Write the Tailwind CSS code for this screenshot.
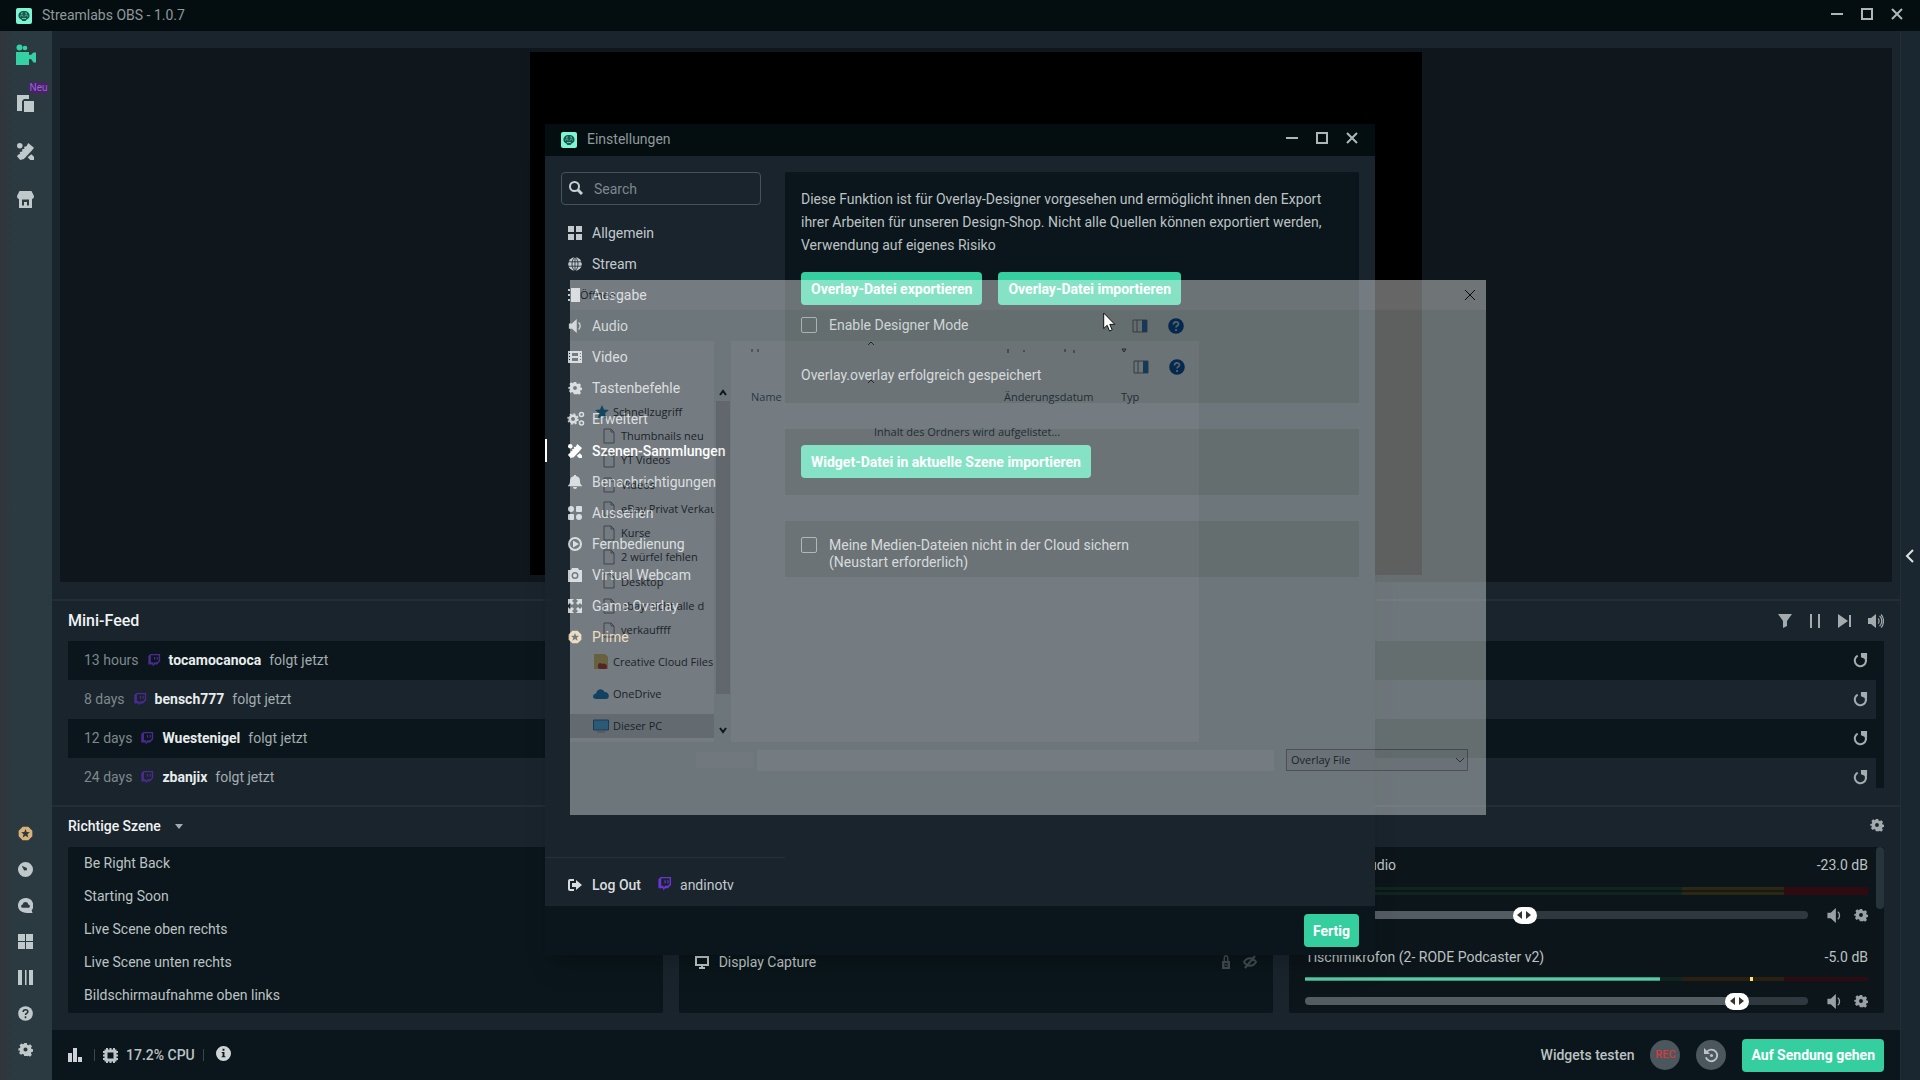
<!DOCTYPE html>
<html lang="de">

<head>
  <meta charset="UTF-8" />
  <meta name="viewport" content="width=device-width, initial-scale=1.0" />
  <title>Streamlabs OBS</title>
  <script src="https://cdn.jsdelivr.net/npm/@tailwindcss/browser@4"></script>
</head>

<body class="relative h-screen overflow-hidden flex flex-col bg-[#19242d] text-[#bdc2c4] text-sm font-[Roboto,sans-serif]">

  <!-- Icon sprite -->
  <svg class="hidden" aria-hidden="true">
    <symbol id="logo" viewBox="0 0 16 16">
      <rect width="16" height="16" rx="2" fill="#80f5d2" />
      <path d="M2.500 8.500C2 5 4.500 3 8 3s6 2 5.500 5.500c-.2 1.500-1.500 2.500-2.500 2.800L9.500 13h-3L5 11.300c-1-.3-2.300-1.300-2.500-2.800z" fill="#17594f" />
      <path d="M4.500 8.500c0-2 2.500-2 2.500 0M9 8.500c0-2 2.500-2 2.500 0M6 10.500h4M5 5.500l2-.7M11 5.500l-2-.7" stroke="#5ec9ab" fill="none" />
    </symbol>
    <symbol id="gear" viewBox="0 0 16 16">
      <path fill-rule="evenodd" d="M6.600 1h2.800l.4 1.900 1.500.6 1.600-1 2 2-1 1.600.5 1.400 1.600.3v2.500l-1.700.4-.5 1.400 1 1.600-2 2-1.600-1-1.400.6L9.400 15H6.600l-.4-1.700-1.500-.6-1.600 1-2-2 1-1.600-.5-1.400L.4 9.200V6.800L2 6.500l.6-1.500-1-1.600 2-1.900 1.500 1 1.300-.6zM8 5.800a2.200 2.200 0 1 0 0 4.400 2.200 2.200 0 0 0 0-4.400z" />
    </symbol>
    <symbol id="twitch" viewBox="0 0 16 16">
      <path fill-rule="evenodd" d="M4 1h11v8.500L11.500 13H8.800L6.500 15.500V13H1.500V3.500zM4.500 2.500v8H7v1.700l1.800-1.700h2.700l2-2v-6zM8 4.500h1.300v3.300H8zm3 0h1.300v3.300H11z" />
    </symbol>
    <symbol id="replay" viewBox="0 0 16 16">
      <path d="M5 2.800A6 6 0 1 0 13 5" fill="none" stroke="currentColor" stroke-width="2.200" />
      <path d="M8.500 0H15v6.300h-2L8.500 4.500z" />
    </symbol>
    <symbol id="speaker" viewBox="0 0 16 16">
      <path d="M1 5h3.500L10 0v16l-5.500-5H1z" />
      <path d="M12 4c2.500 1.500 2.500 6.500 0 8" fill="none" stroke="currentColor" stroke-width="1.500" />
    </symbol>
    <symbol id="tools" viewBox="0 0 16 16">
      <path d="M10.500 0L16 4.500l-2 2.500L6.500 15 3 16 0 12.500 1 11l2-1-.5-1.500L5 8l-.3-2L7 5.500l-.3-2L9 3z" />
      <circle cx="2.600" cy="2.600" r="2.600" />
      <path d="M13.500 10.500L16 13v3h-3.500L10 13.500z" />
    </symbol>
    <symbol id="prime" viewBox="0 0 16 16">
      <path fill-rule="evenodd" d="M5 .8h6l4.300 4.200v6L11 15.200H5L.7 11V5zM8 3.300L6.700 6.500 3.300 6.700l2.600 2.200L5 12.300l3-1.900 3 1.900-.9-3.400 2.600-2.200-3.400-.2z" />
    </symbol>
    <symbol id="doc" viewBox="0 0 12 16">
      <path d="M1 1h7l3 3v11H1zM8 1v3h3" fill="none" stroke="#777" />
    </symbol>
    <symbol id="help" viewBox="0 0 16 16">
      <circle cx="8" cy="8" r="7.800" />
      <path d="M5.500 6.500c0-3.300 5-3.300 5-.5 0 1.800-2.500 1.800-2.500 3.500M8 11v2" fill="none" stroke="currentColor" stroke-width="1.700" />
    </symbol>
    <symbol id="win-min" viewBox="0 0 14 14">
      <path d="M1 7h12" fill="none" stroke="currentColor" stroke-width="2" />
    </symbol>
    <symbol id="win-max" viewBox="0 0 14 14">
      <path d="M2 2h10v10H2z" fill="none" stroke="currentColor" stroke-width="2" />
    </symbol>
    <symbol id="win-close" viewBox="0 0 14 14">
      <path d="M2 2l10 10M12 2L2 12" fill="none" stroke="currentColor" stroke-width="2" />
    </symbol>
    <symbol id="preview-pane" viewBox="0 0 16 14">
      <path d="M1 1h14v12H1zM5 1v12" fill="none" stroke="#777" />
      <path d="M10 1h5v12h-5z" fill="#2a6db5" />
    </symbol>
    <symbol id="thumb-arrows" viewBox="0 0 14 8">
      <path d="M5 0v8L0 4zM9 0v8l5-4z" />
    </symbol>
  </svg>

  <!-- Title bar -->
  <header class="flex items-center h-[31px] shrink-0 pl-4 pr-4 bg-[#040e11] text-[#90989a]">
    <svg class="size-4"><use href="#logo" /></svg>
    <h1 class="ml-[10px] pb-px">Streamlabs OBS - 1.0.7</h1>
    <div class="ml-auto flex gap-4 pb-1 text-[#b0b6b7]">
      <button aria-label="Minimieren"><svg class="size-[14px]"><use href="#win-min" /></svg></button>
      <button aria-label="Maximieren"><svg class="size-[14px]"><use href="#win-max" /></svg></button>
      <button aria-label="Schließen"><svg class="size-[14px]"><use href="#win-close" /></svg></button>
    </div>
  </header>

  <div class="flex flex-1 min-h-0">

    <!-- Left navigation -->
    <nav class="flex flex-col justify-between items-center w-[52px] shrink-0 pt-[6px] pb-[13px] pr-px bg-linear-to-r from-[#30353b] to-[#2b3a41] to-30% text-[#bfc9cc] fill-current">
      <div class="flex flex-col gap-[12px]">
        <button aria-label="Editor" class="flex items-center justify-center h-9 text-[#35d0a3]">
          <svg class="w-5 h-[22px]" viewBox="0 0 20 22"><circle cx="3.500" cy="3.500" r="3" /><circle cx="9" cy="4" r="2.300" /><path d="M0 8h13v3l2-.2 2.500-2.300H20v10h-2.500L15 15l-2 .3V21H0z" /></svg>
        </button>
        <button aria-label="Layouts" class="relative flex items-center justify-center h-9">
          <svg class="size-[17px]" viewBox="0 0 17 17"><path d="M0 0h12v4H7L5 6v10H0z" /><path d="M7 6h10v11H7z" /></svg>
          <span class="absolute -top-[3px] left-[13px] px-px rounded-sm bg-[#45265f] text-[#9b5fe0] text-[10px] leading-[12px]">Neu</span>
        </button>
        <button aria-label="Themes" class="flex items-center justify-center h-9"><svg class="size-[17px]"><use href="#tools" /></svg></button>
        <button aria-label="App Store" class="flex items-center justify-center h-9">
          <svg class="size-[17px]" viewBox="0 0 17 17"><path fill-rule="evenodd" d="M2.500 0h12L17 5c0 2-1 3-2 3v9H2V8C1 8 0 7 0 5zM5 8.500v6h2V11h3v3.500h2v-6z" /></svg>
        </button>
      </div>
      <div class="flex flex-col">
        <button aria-label="Prime" class="flex items-center justify-center h-9 text-[#d8b27a]"><svg class="size-[15px]"><use href="#prime" /></svg></button>
        <button aria-label="Dashboard" class="flex items-center justify-center h-9"><svg class="size-[15px]" viewBox="0 0 16 16"><path fill-rule="evenodd" d="M8 0a8 8 0 1 1 0 16A8 8 0 0 1 8 0zM4 4l2.500 5 3-.3V6.300z" /></svg></button>
        <button aria-label="Cloudbot" class="flex items-center justify-center h-9"><svg class="size-[15px]" viewBox="0 0 16 16"><path fill-rule="evenodd" d="M8 0c9 0 10 10 6.500 13l1 3H10C3 16 0 12 0 8s3-8 8-8zM5 10.500h6c2.500 0 2-3.500 0-3.500-.5-3.500-5.500-3.500-6 0-2 0-2.500 3.500 0 3.500z" /></svg></button>
        <button aria-label="Layout" class="flex items-center justify-center h-9"><svg class="size-[15px]" viewBox="0 0 15 15"><path d="M0 0h7v7H0zM8 0h7v7H8zM0 8h7v7H0zM8 8h7v7H8z" /></svg></button>
        <button aria-label="Statistik" class="flex items-center justify-center h-9"><svg class="size-[15px]" viewBox="0 0 15 15"><path d="M0 0h4v15H0zM7 0h1.500v15H7zM11 0h4v15h-4z" /></svg></button>
        <button aria-label="Hilfe" class="flex items-center justify-center h-9"><svg class="size-[15px] fill-[#bfc9cc] text-[#26343b]"><use href="#help" /></svg></button>
        <button aria-label="Einstellungen" class="flex items-center justify-center h-9"><svg class="size-[15px]"><use href="#gear" /></svg></button>
      </div>
    </nav>

    <main class="flex flex-col flex-1 min-w-0">
      <!-- Preview -->
      <section class="flex-1 min-h-0 px-2 py-[17px] border-b-2 border-[#212e36]">
        <div class="flex justify-center h-full pt-1 pb-[7px] bg-[#0f171c]">
          <div class="h-full aspect-[894/524] bg-black"></div>
        </div>
      </section>

      <!-- Mini feed -->
      <section class="h-[206px] shrink-0 px-4 border-b-2 border-[#212e36]">
        <div class="flex items-center h-10">
          <h2 class="text-base font-medium text-[#f0f3f3]">Mini-Feed</h2>
          <div class="ml-auto flex items-center gap-4 text-[#a3abae] fill-current">
            <button aria-label="Filter"><svg class="size-[14px]" viewBox="0 0 14 14"><path d="M0 0h14L9 7v5l-4 2V7z" /></svg></button>
            <button aria-label="Pause"><svg class="size-[14px]" viewBox="0 0 14 14"><path d="M2 0h2v14H2zM10 0h2v14h-2z" /></svg></button>
            <button aria-label="Weiter"><svg class="size-[14px]" viewBox="0 0 14 14"><path d="M0 0l10 7-10 7zM11 1h2v12h-2z" /></svg></button>
            <button aria-label="Ton"><svg class="w-4 h-[14px]" viewBox="0 0 16 14"><path d="M0 4h3l5-4v14l-5-4H0z" /><path d="M10 4.500c1.500 1 1.500 4 0 5M11.500 2c3 2 3 8 0 10M13 .5c3.300 3 3.300 10 0 13" fill="none" stroke="currentColor" stroke-width="1.200" /></svg></button>
          </div>
        </div>
        <ul class="h-[147px] overflow-hidden pr-2 bg-[#0a161b] text-[#a3acaf]">
          <li class="flex items-center h-[39px] pl-4 pr-2 pb-px">
            <span class="text-[#7e888c]">13 hours</span>
            <svg class="size-[14px] mx-2 fill-[#4b2a91]"><use href="#twitch" /></svg>
            <b class="font-bold text-[#e8ecec]">tocamocanoca</b><span class="ml-2">folgt jetzt</span>
            <button aria-label="Wiederholen" class="ml-auto"><svg class="size-[15px] fill-current"><use href="#replay" /></svg></button>
          </li>
          <li class="flex items-center h-[39px] pl-4 pr-2 pb-px bg-[#19242d]">
            <span class="text-[#7e888c]">8 days</span>
            <svg class="size-[14px] mx-2 fill-[#4b2a91]"><use href="#twitch" /></svg>
            <b class="font-bold text-[#e8ecec]">bensch777</b><span class="ml-2">folgt jetzt</span>
            <button aria-label="Wiederholen" class="ml-auto"><svg class="size-[15px] fill-current"><use href="#replay" /></svg></button>
          </li>
          <li class="flex items-center h-[39px] pl-4 pr-2 pb-px">
            <span class="text-[#7e888c]">12 days</span>
            <svg class="size-[14px] mx-2 fill-[#4b2a91]"><use href="#twitch" /></svg>
            <b class="font-bold text-[#e8ecec]">Wuestenigel</b><span class="ml-2">folgt jetzt</span>
            <button aria-label="Wiederholen" class="ml-auto"><svg class="size-[15px] fill-current"><use href="#replay" /></svg></button>
          </li>
          <li class="flex items-center h-[39px] pl-4 pr-2 pb-px bg-[#19242d]">
            <span class="text-[#7e888c]">24 days</span>
            <svg class="size-[14px] mx-2 fill-[#4b2a91]"><use href="#twitch" /></svg>
            <b class="font-bold text-[#e8ecec]">zbanjix</b><span class="ml-2">folgt jetzt</span>
            <button aria-label="Wiederholen" class="ml-auto"><svg class="size-[15px] fill-current"><use href="#replay" /></svg></button>
          </li>
        </ul>
      </section>

      <!-- Scenes, sources, mixer -->
      <section class="grid grid-cols-3 gap-4 h-[223px] shrink-0 px-4 pb-[17px]">
        <div class="flex flex-col">
          <div class="flex items-center h-10 gap-[14px] pb-[2px]">
            <h2 class="font-medium text-[#f0f3f3]">Richtige Szene</h2>
            <svg class="w-2 h-[5px] fill-[#a3abae]" viewBox="0 0 8 5"><path d="M0 0h8L4 5z" /></svg>
          </div>
          <ul class="flex-1 bg-[#0a161b] rounded-xs px-4">
            <li class="leading-[33px]">Be Right Back</li>
            <li class="leading-[33px]">Starting Soon</li>
            <li class="leading-[33px]">Live Scene oben rechts</li>
            <li class="leading-[33px]">Live Scene unten rechts</li>
            <li class="leading-[33px]">Bildschirmaufnahme oben links</li>
          </ul>
        </div>
        <div class="flex flex-col pt-10">
          <div class="flex-1 bg-[#0a161b] rounded-xs px-4 pt-[98px]">
            <div class="flex items-center h-[33px]">
              <svg class="size-[14px] fill-none stroke-current stroke-2" viewBox="0 0 14 14"><path d="M1 2h12v8H1zM4 13h6M7 10v3" /></svg>
              <span class="ml-[10px]">Display Capture</span>
              <svg class="ml-auto size-[14px] fill-[#414b50]" viewBox="0 0 14 14"><path fill-rule="evenodd" d="M3 6h1.500V3c0-4 5-4 5 0v3H11v8H3zM6 6h2V3c0-2-2-2-2 0zM5.500 8v4h3V8zM6.300 9v2h1.400V9z" /></svg>
              <svg class="ml-[10px] size-[14px] fill-none stroke-[#414b50] stroke-2" viewBox="0 0 14 14"><path d="M1 7c3-5 9-5 12 0-3 5-9 5-12 0zM12 1L2 13" /></svg>
            </div>
          </div>
        </div>
        <div class="flex flex-col">
          <div class="flex items-center justify-end h-10 pb-1">
            <button aria-label="Mixer-Einstellungen"><svg class="size-[14px] fill-[#a3abae]"><use href="#gear" /></svg></button>
          </div>
          <div class="flex flex-1 min-h-0 pl-4 bg-[#0c151a] rounded-xs">
            <div class="flex-1 pr-2">
              <div class="flex items-center justify-between h-9"><label for="vol1">Desktop Audio</label><span>-23.0 dB</span></div>
              <!-- stereo meter -->
              <div class="flex mt-1 h-2">
                <div class="w-[67%] border-y-3 border-[#11251f] bg-[#0c151a]"></div>
                <div class="w-[18%] border-y-3 border-[#2b2815] bg-[#19190f]"></div>
                <div class="w-[15%] bg-[#2d0b10]"></div>
              </div>
              <div class="flex items-center h-6 mt-2 text-[#9aa1a4] fill-current">
                <div class="relative flex items-center flex-1 h-[17px]">
                  <input id="vol1" type="range" max="1000" value="433" class="appearance-none w-full h-2 rounded-full [&::-webkit-slider-thumb]:appearance-none [&::-webkit-slider-thumb]:w-6 [&::-webkit-slider-thumb]:h-[17px] [&::-webkit-slider-thumb]:rounded-full [&::-webkit-slider-thumb]:bg-white" style="background: linear-gradient(to right, #545c63 44%, #2f383e 44%)" />
                  <svg class="absolute w-[14px] h-2 -translate-x-1/2 fill-[#333] pointer-events-none" style="left: 43.600%"><use href="#thumb-arrows" /></svg>
                </div>
                <button aria-label="Stumm" class="ml-[18px]"><svg class="w-4 h-[15px]"><use href="#speaker" /></svg></button>
                <button aria-label="Optionen" class="ml-3"><svg class="size-[14px]"><use href="#gear" /></svg></button>
              </div>
              <div class="flex items-center justify-between h-9 mt-3"><label for="vol2">Tischmikrofon (2- RODE Podcaster v2)</label><span>-5.0 dB</span></div>
              <div class="flex mt-[2px] h-1">
                <div class="w-[63%] border-y border-[#3a9a7d] bg-[#5bc9a5]"></div>
                <div class="w-[4%] bg-[#11251f]"></div>
                <div class="w-[12%] bg-[#2b2010]"></div>
                <div class="w-[3px] bg-[#ffe27a]"></div>
                <div class="flex-1 bg-[#2b2010]"></div>
                <div class="w-[15%] bg-[#2d0b10]"></div>
              </div>
              <div class="flex items-center h-6 mt-2 text-[#9aa1a4] fill-current">
                <div class="relative flex items-center flex-1 h-[17px]">
                  <input id="vol2" type="range" max="1000" value="877" class="appearance-none w-full h-2 rounded-full [&::-webkit-slider-thumb]:appearance-none [&::-webkit-slider-thumb]:w-6 [&::-webkit-slider-thumb]:h-[17px] [&::-webkit-slider-thumb]:rounded-full [&::-webkit-slider-thumb]:bg-white" style="background: linear-gradient(to right, #545c63 86%, #2f383e 86%)" />
                  <svg class="absolute w-[14px] h-2 -translate-x-1/2 fill-[#333] pointer-events-none" style="left: 85.900%"><use href="#thumb-arrows" /></svg>
                </div>
                <button aria-label="Stumm" class="ml-[18px]"><svg class="w-4 h-[15px]"><use href="#speaker" /></svg></button>
                <button aria-label="Optionen" class="ml-3"><svg class="size-[14px]"><use href="#gear" /></svg></button>
              </div>
            </div>
            <div class="w-2"><div class="h-[62px] rounded-full bg-[#28343b]"></div></div>
          </div>
        </div>
      </section>

      <!-- Footer -->
      <footer class="flex items-center h-[50px] shrink-0 px-4 bg-[#0a161b]">
        <svg class="size-[14px] fill-[#cfd0d8]" viewBox="0 0 14 14"><path d="M0 5h4v9H0zM5 0h4v14H5zM10 9h4v5h-4z" /></svg>
        <i class="w-px h-3 ml-3 mr-2 bg-[#3a454a]"></i>
        <svg class="size-[15px] fill-none stroke-[#bdc5c8]" viewBox="0 0 15 15"><path d="M3 3h9v9H3z" stroke-width="3" /><path d="M4 0v2M7.500 0v2M11 0v2M4 13v2M7.500 13v2M11 13v2M0 4h2M0 7.500h2M0 11h2M13 4h2M13 7.500h2M13 11h2" stroke-width="2" /></svg>
        <span class="ml-2 font-medium">17.2% CPU</span>
        <i class="w-px h-3 mx-2 bg-[#3a454a]"></i>
        <svg class="ml-1 size-[15px] mb-1 fill-[#cfd5d7]" viewBox="0 0 16 16"><path fill-rule="evenodd" d="M8 0a8 8 0 1 1 0 16A8 8 0 0 1 8 0zM7 3v2h2V3zM6 6.500v1h1V11H6v1h4v-1H9V6.500z" /></svg>
        <button class="ml-auto font-medium">Widgets testen</button>
        <button class="ml-4 size-[30px] rounded-full bg-[#4c575d] text-[#d23b40] text-[11px] font-medium">REC</button>
        <button aria-label="Replay-Puffer" class="ml-4 flex items-center justify-center size-[30px] rounded-full bg-[#4c575d]">
          <svg class="size-[15px]" viewBox="0 0 16 16"><path d="M3 4a6.200 6.200 0 1 1-1 6" fill="none" stroke="currentColor" stroke-width="2" /><path d="M0 0v6.500h6.500z" fill="currentColor" /><circle cx="8" cy="8" r="1.700" fill="currentColor" /></svg>
        </button>
        <button class="ml-4 h-[33px] px-[9px] rounded-sm bg-[#35cf9f] text-white font-bold">Auf Sendung gehen</button>
      </footer>
    </main>

    <!-- Collapsed live dock -->
    <aside class="flex items-center w-5 shrink-0 border-l border-[#212e36] bg-[#1a2730]">
      <button aria-label="Dock öffnen" class="ml-1"><svg class="w-[10px] h-[14px] fill-none stroke-[#dfe3e4] stroke-2" viewBox="0 0 10 14"><path d="M8 1L2 7l6 6" /></svg></button>
    </aside>
  </div>

  <!-- Settings window -->
  <div role="dialog" aria-label="Einstellungen" class="absolute left-[545px] top-[124px] w-[830px] h-[831px] flex flex-col bg-[#19242d] shadow-xl">
    <header class="flex items-center h-8 shrink-0 pl-4 pr-4 bg-[#040e11] text-[#90989a]">
      <svg class="size-4"><use href="#logo" /></svg>
      <h2 class="ml-[10px] pb-[2px]">Einstellungen</h2>
      <div class="ml-auto flex gap-4 pb-1 text-[#b0b6b7]">
        <button aria-label="Minimieren"><svg class="size-[14px]"><use href="#win-min" /></svg></button>
        <button aria-label="Maximieren"><svg class="size-[14px]"><use href="#win-max" /></svg></button>
        <button aria-label="Schließen"><svg class="size-[14px]"><use href="#win-close" /></svg></button>
      </div>
    </header>
    <div class="flex flex-1 min-h-0">
      <div class="flex flex-col w-60 shrink-0">
        <div class="relative mt-4 ml-4 mr-6">
          <input type="text" aria-label="Search" placeholder="Search" class="w-full h-[33px] pl-8 pr-2 border border-[#45525a] rounded-sm text-sm placeholder:text-[#7e888c]" />
          <svg class="absolute left-2 top-[9px] size-[14px] fill-none stroke-[#c9d0d3] stroke-2" viewBox="0 0 14 14"><circle cx="5.500" cy="5.500" r="4.500" /><path d="M9 9l4 4" stroke-width="3" /></svg>
        </div>
        <nav class="flex flex-col h-[436px] mt-3 text-[#c3c9cc] fill-current">
          <a href="#" class="flex flex-1 items-center gap-[10px] pl-[23px]"><svg class="size-[14px]" viewBox="0 0 14 14"><path d="M0 0h6v6H0zM8 0h6v6H8zM0 8h6v6H0zM8 8h6v6H8z" /></svg>Allgemein</a>
          <a href="#" class="flex flex-1 items-center gap-[10px] pl-[23px]"><svg class="size-[14px]" viewBox="0 0 14 14"><circle cx="7" cy="7" r="6.800" /><path d="M0 4.800h14M0 9.200h14M7 0v14M7 0C3 3 3 11 7 14M7 0c4 3 4 11 0 14" fill="none" stroke="#19242d" stroke-width=".8" /></svg>Stream</a>
          <a href="#" class="flex flex-1 items-center gap-[10px] pl-[23px]"><svg class="size-[14px]" viewBox="0 0 14 14"><path d="M3 0h9v14H3zM0 1h2v2H0zM0 6h2v2H0zM0 11h2v2H0z" /></svg>Ausgabe</a>
          <a href="#" class="flex flex-1 items-center gap-[10px] pl-[23px]"><svg class="size-[14px]"><use href="#speaker" /></svg>Audio</a>
          <a href="#" class="flex flex-1 items-center gap-[10px] pl-[23px]"><svg class="size-[14px]" viewBox="0 0 14 14"><path fill-rule="evenodd" d="M0 1h14v12H0zM4 3v3h6V3zM4 8v3h6V8zM1 3v1h1V3zM1 6v1h1V6zM1 9v1h1V9zM12 3v1h1V3zM12 6v1h1V6zM12 9v1h1V9z" /></svg>Video</a>
          <a href="#" class="flex flex-1 items-center gap-[10px] pl-[23px]"><svg class="size-[14px]"><use href="#gear" /></svg>Tastenbefehle</a>
          <a href="#" class="flex flex-1 items-center gap-[10px] pl-[23px]"><svg class="size-[14px] overflow-visible" viewBox="0 0 14 14"><g fill="none" stroke="currentColor"><circle cx="5" cy="7" r="3.300" stroke-width="2.500" /><circle cx="5" cy="7" r="5" stroke-width="1.500" stroke-dasharray="2 1.900" /><circle cx="13.500" cy="2.500" r="2" stroke-width="1.500" /><circle cx="13.500" cy="11" r="2" stroke-width="1.500" /></g></svg>Erweitert</a>
          <a href="#" aria-current="page" class="relative flex flex-1 items-center gap-[10px] pl-[23px] text-white font-medium"><i class="absolute left-0 h-[23px] w-[2px] bg-white"></i><svg class="size-[14px]"><use href="#tools" /></svg>Szenen-Sammlungen</a>
          <a href="#" class="flex flex-1 items-center gap-[10px] pl-[23px]"><svg class="size-[14px]" viewBox="0 0 14 14"><path d="M6 0h2v1c3 .5 4 2.500 4 5 0 2 .5 3.500 2 4.500v.8H0v-.8C1.500 9.500 2 8 2 6c0-2.500 1-4.500 4-5zM5 12h4c0 2.500-4 2.500-4 0z" /></svg>Benachrichtigungen</a>
          <a href="#" class="flex flex-1 items-center gap-[10px] pl-[23px]"><svg class="size-[14px]" viewBox="0 0 14 14"><circle cx="3" cy="3" r="3" /><rect x="8" width="6" height="6" rx="1" /><rect y="8" width="6" height="6" rx="1" /><circle cx="11" cy="11" r="3" /></svg>Aussehen</a>
          <a href="#" class="flex flex-1 items-center gap-[10px] pl-[23px]"><svg class="size-[14px]" viewBox="0 0 14 14"><path fill-rule="evenodd" d="M7 0a7 7 0 1 1 0 14A7 7 0 0 1 7 0zM7 2a5 5 0 1 0 0 10A5 5 0 0 0 7 2z" /><path d="M5 3.500l6 3.500-6 3.500z" /></svg>Fernbedienung</a>
          <a href="#" class="flex flex-1 items-center gap-[10px] pl-[23px]"><svg class="size-[14px]" viewBox="0 0 14 14"><path fill-rule="evenodd" d="M0 2h3l1-2h6l1 2h3v12H0zM7 4a3.500 3.500 0 1 0 0 7 3.500 3.500 0 0 0 0-7zM7 5.500a2 2 0 1 1 0 4 2 2 0 0 1 0-4z" /></svg>Virtual Webcam</a>
          <a href="#" class="flex flex-1 items-center gap-[10px] pl-[23px]"><svg class="size-[14px]" viewBox="0 0 14 14"><path d="M0 0h6L4 2l2 2-2 2-2-2-2 2zM14 0v6l-2-2-2 2-2-2 2-2-2-2zM0 14V8l2 2 2-2 2 2-2 2 2 2zM14 14H8l2-2-2-2 2-2 2 2 2-2z" /></svg>Game Overlay</a>
          <a href="#" class="flex flex-1 items-center gap-[10px] pl-[23px] text-[#e0c79c]"><svg class="size-[14px]"><use href="#prime" /></svg>Prime</a>
        </nav>
        <div class="flex items-center h-[49px] mt-auto pl-[23px] pt-[6px] border-t border-[#24313a] text-[#c3c9cc]">
          <button class="flex items-center gap-[10px] font-medium text-[#d9dddf]"><svg class="size-[14px] fill-current" viewBox="0 0 14 14"><path d="M6 1H2Q0 1 0 3v8q0 2 2 2h4v-2H2V3h4zM8 2l6 5-6 5V9H4V5h4z" /></svg>Log Out</button>
          <svg class="size-[15px] ml-4 mr-2 mb-1 fill-[#6a34d6]"><use href="#twitch" /></svg>
          <span>andinotv</span>
        </div>
      </div>
      <div class="flex-1 flex flex-col gap-[26px] pt-4 pr-4">
        <section class="h-[231px] rounded-xs px-4 pt-4 bg-[#0a161b]">
          <p class="leading-[23px]">Diese Funktion ist für Overlay-Designer vorgesehen und ermöglicht ihnen den Export ihrer Arbeiten für unseren Design-Shop. Nicht alle Quellen können exportiert werden, Verwendung auf eigenes Risiko</p>
          <div class="flex gap-4 mt-[15px]">
            <button class="h-[33px] px-[10px] rounded-sm bg-[#35cf9f] text-white font-bold">Overlay-Datei exportieren</button>
            <button class="h-[33px] px-[10px] rounded-sm bg-[#35cf9f] text-white font-bold">Overlay-Datei importieren</button>
          </div>
          <label class="flex gap-3 mt-3 leading-[17px]"><input type="checkbox" class="appearance-none size-4 border border-[#7f898d] rounded-xs" />Enable Designer Mode</label>
          <p class="mt-[33px] leading-[17px]">Overlay.overlay erfolgreich gespeichert</p>
        </section>
        <section class="h-[66px] rounded-xs px-4 pt-4 bg-[#0a161b]">
          <button class="h-[33px] px-[10px] rounded-sm bg-[#35cf9f] text-white font-bold">Widget-Datei in aktuelle Szene importieren</button>
        </section>
        <section class="h-[56px] rounded-xs px-4 pt-4 bg-[#0a161b]">
          <label class="flex gap-3 leading-[17px]"><input type="checkbox" class="appearance-none size-4 border border-[#7f898d] rounded-xs" /><span>Meine Medien-Dateien nicht in der Cloud sichern<br>(Neustart erforderlich)</span></label>
        </section>
      </div>
    </div>
    <footer class="flex items-center justify-end h-[49px] shrink-0 px-4 bg-[#0a161b]">
      <button class="h-[33px] px-[9px] rounded-sm bg-[#35cf9f] text-white font-bold">Fertig</button>
    </footer>
  </div>

  <!-- File dialog, fading out -->
  <div role="dialog" aria-label="Öffnen" class="absolute left-[570px] top-[280px] w-[916px] h-[535px] flex flex-col opacity-40 bg-[#ecf1ee] text-[#222] text-[11px] font-['Open_Sans',sans-serif]">
    <header class="flex items-center h-[30px] shrink-0 px-[2px] bg-white">
      <i class="w-[6px] h-[14px] bg-white"></i>
      <h2 class="ml-[2px]">Öffnen</h2>
      <button aria-label="Schließen" class="ml-auto mr-2"><svg class="size-3 fill-none stroke-black" viewBox="0 0 12 12"><path d="M1 1l10 10M11 1L1 11" /></svg></button>
    </header>
    <div class="flex items-center justify-end gap-5 h-[31px] shrink-0 pr-[302px]">
      <button aria-label="Vorschaufenster"><svg class="w-4 h-[14px]"><use href="#preview-pane" /></svg></button>
      <button aria-label="Hilfe"><svg class="size-4 fill-[#00449c] text-[#c8dcea]"><use href="#help" /></svg></button>
    </div>
    <div class="flex h-[401px] shrink-0">
      <div class="w-[144px] shrink-0 overflow-hidden bg-white pt-[59px] whitespace-nowrap">
        <div class="flex items-center h-6 pl-[25px]"><svg class="size-[14px] shrink-0 mr-1 fill-[#0b78a8]" viewBox="0 0 14 14"><path d="M7 0l2 4.500 5 .5-4 3.300L11.500 14 7 11l-4.500 3L4 8.300 0 5l5-.5z" /></svg>Schnellzugriff</div>
        <ul class="flex flex-col h-[218px]">
          <li class="flex flex-1 items-center gap-[6px] pl-[33px]"><svg class="w-3 h-4 shrink-0"><use href="#doc" /></svg>Thumbnails neu</li>
          <li class="flex flex-1 items-center gap-[6px] pl-[33px]"><svg class="w-3 h-4 shrink-0"><use href="#doc" /></svg>YT Videos</li>
          <li class="flex flex-1 items-center gap-[6px] pl-[33px]"><svg class="w-3 h-4 shrink-0"><use href="#doc" /></svg>Videos</li>
          <li class="flex flex-1 items-center gap-[6px] pl-[33px]"><svg class="w-3 h-4 shrink-0"><use href="#doc" /></svg>eBay Privat Verkau</li>
          <li class="flex flex-1 items-center gap-[6px] pl-[33px]"><svg class="w-3 h-4 shrink-0"><use href="#doc" /></svg>Kurse</li>
          <li class="flex flex-1 items-center gap-[6px] pl-[33px]"><svg class="w-3 h-4 shrink-0"><use href="#doc" /></svg>2 würfel fehlen</li>
          <li class="flex flex-1 items-center gap-[6px] pl-[33px]"><svg class="w-3 h-4 shrink-0"><use href="#doc" /></svg>Desktop</li>
          <li class="flex flex-1 items-center gap-[6px] pl-[33px]"><svg class="w-3 h-4 shrink-0"><use href="#doc" /></svg>ebay nicht alle d</li>
          <li class="flex flex-1 items-center gap-[6px] pl-[33px]"><svg class="w-3 h-4 shrink-0"><use href="#doc" /></svg>verkauffff</li>
        </ul>
        <div class="flex items-center h-6 mt-2 pl-[23px]"><svg class="size-4 shrink-0 mr-1" viewBox="0 0 16 16"><path d="M1 0h11l3 3v12H1z" fill="#d9bd5b" /><path d="M5 13c-1-4 3-5 4-3 3-2 7 2 4 5H7c-1 0-2-1-2-2z" fill="#b3261c" /></svg>Creative Cloud Files</div>
        <div class="flex items-center h-6 mt-2 pl-[23px]"><svg class="w-4 h-3 shrink-0 mr-1 fill-[#0b70ad]" viewBox="0 0 16 12"><path d="M3 11c-4 0-4-5 0-5.500C4 0 10 0 11.500 4 17 4 17 11 13 11z" /></svg>OneDrive</div>
        <div class="flex items-center h-6 mt-2 pl-[23px] bg-[#d5d5d5]"><svg class="w-4 h-[14px] shrink-0 mr-1" viewBox="0 0 16 14"><path d="M.5 1h15v10H.5z" fill="#49a8e0" stroke="#1c5f8f" /><path d="M4 13h8" stroke="#888" /></svg>Dieser PC</div>
      </div>
      <div class="flex flex-col items-center w-[14px] shrink-0 ml-[2px] pt-[48px] pb-2">
        <svg class="size-2 fill-none stroke-black stroke-2" viewBox="0 0 8 8"><path d="M1 6l3-4 3 4" /></svg>
        <i class="w-full h-[293px] mt-1 bg-[#cdcdcd]"></i>
        <svg class="size-2 mt-auto fill-none stroke-black stroke-2" viewBox="0 0 8 8"><path d="M1 2l3 4 3-4" /></svg>
      </div>
      <div class="w-[468px] shrink-0 ml-[1px] bg-white">
        <!-- previous frame of the column header -->
        <svg class="w-full h-4 fill-none stroke-[#444]" viewBox="0 0 468 16"><path d="M137 4l3-3 3 3M21 8v3M27 8v3M277 8v4M293 9v2M334 8v3M343 9v3M391 8h4l-2 3z" /></svg>
        <div class="flex justify-end gap-5 pr-[14px] mt-[2px]">
          <button aria-label="Vorschaufenster"><svg class="w-4 h-[14px]"><use href="#preview-pane" /></svg></button>
          <button aria-label="Hilfe"><svg class="size-4 fill-[#00449c] text-[#c8dcea]"><use href="#help" /></svg></button>
        </div>
        <svg class="block w-2 h-[5px] ml-[136px] mt-1 fill-none stroke-[#444]" viewBox="0 0 8 5"><path d="M1 4l3-3 3 3" /></svg>
        <table class="w-full table-fixed mt-[3px] text-left text-[#445260]">
          <thead>
            <tr>
              <th class="w-[273px] h-5 pl-5 font-normal">Name</th>
              <th class="w-[117px] font-normal">Änderungsdatum</th>
              <th class="font-normal">Typ</th>
            </tr>
          </thead>
          <tbody>
            <tr>
              <td colspan="3" class="h-[50px] pl-[143px]">Inhalt des Ordners wird aufgelistet...</td>
            </tr>
          </tbody>
        </table>
      </div>
    </div>
    <div class="flex items-center gap-1 h-9 pl-[126px] pr-[18px]">
      <i class="w-[57px] h-4 bg-[#f8f8f8]"></i>
      <input type="text" aria-label="Dateiname" class="flex-1 h-[21px] bg-white" />
      <div class="relative ml-2">
        <select aria-label="Dateityp" class="appearance-none w-[182px] h-[22px] pl-1 border border-[#999] bg-[#e4e8e6] text-[11px]">
          <option>Overlay File</option>
        </select>
        <svg class="absolute right-1 top-2 w-2 h-[6px] fill-none stroke-[#444] pointer-events-none" viewBox="0 0 8 6"><path d="M0 1l4 4 4-4" /></svg>
      </div>
    </div>
  </div>

  <!-- Mouse pointer -->
  <svg class="absolute left-[1103px] top-[312px] w-[13px] h-5" viewBox="0 0 13 20"><path d="M.7 1v15.500l3.500-3.200 2.300 5.700 2.700-1.100-2.400-5.500h5z" fill="#fff" stroke="#111" /></svg>
</body>

</html>
